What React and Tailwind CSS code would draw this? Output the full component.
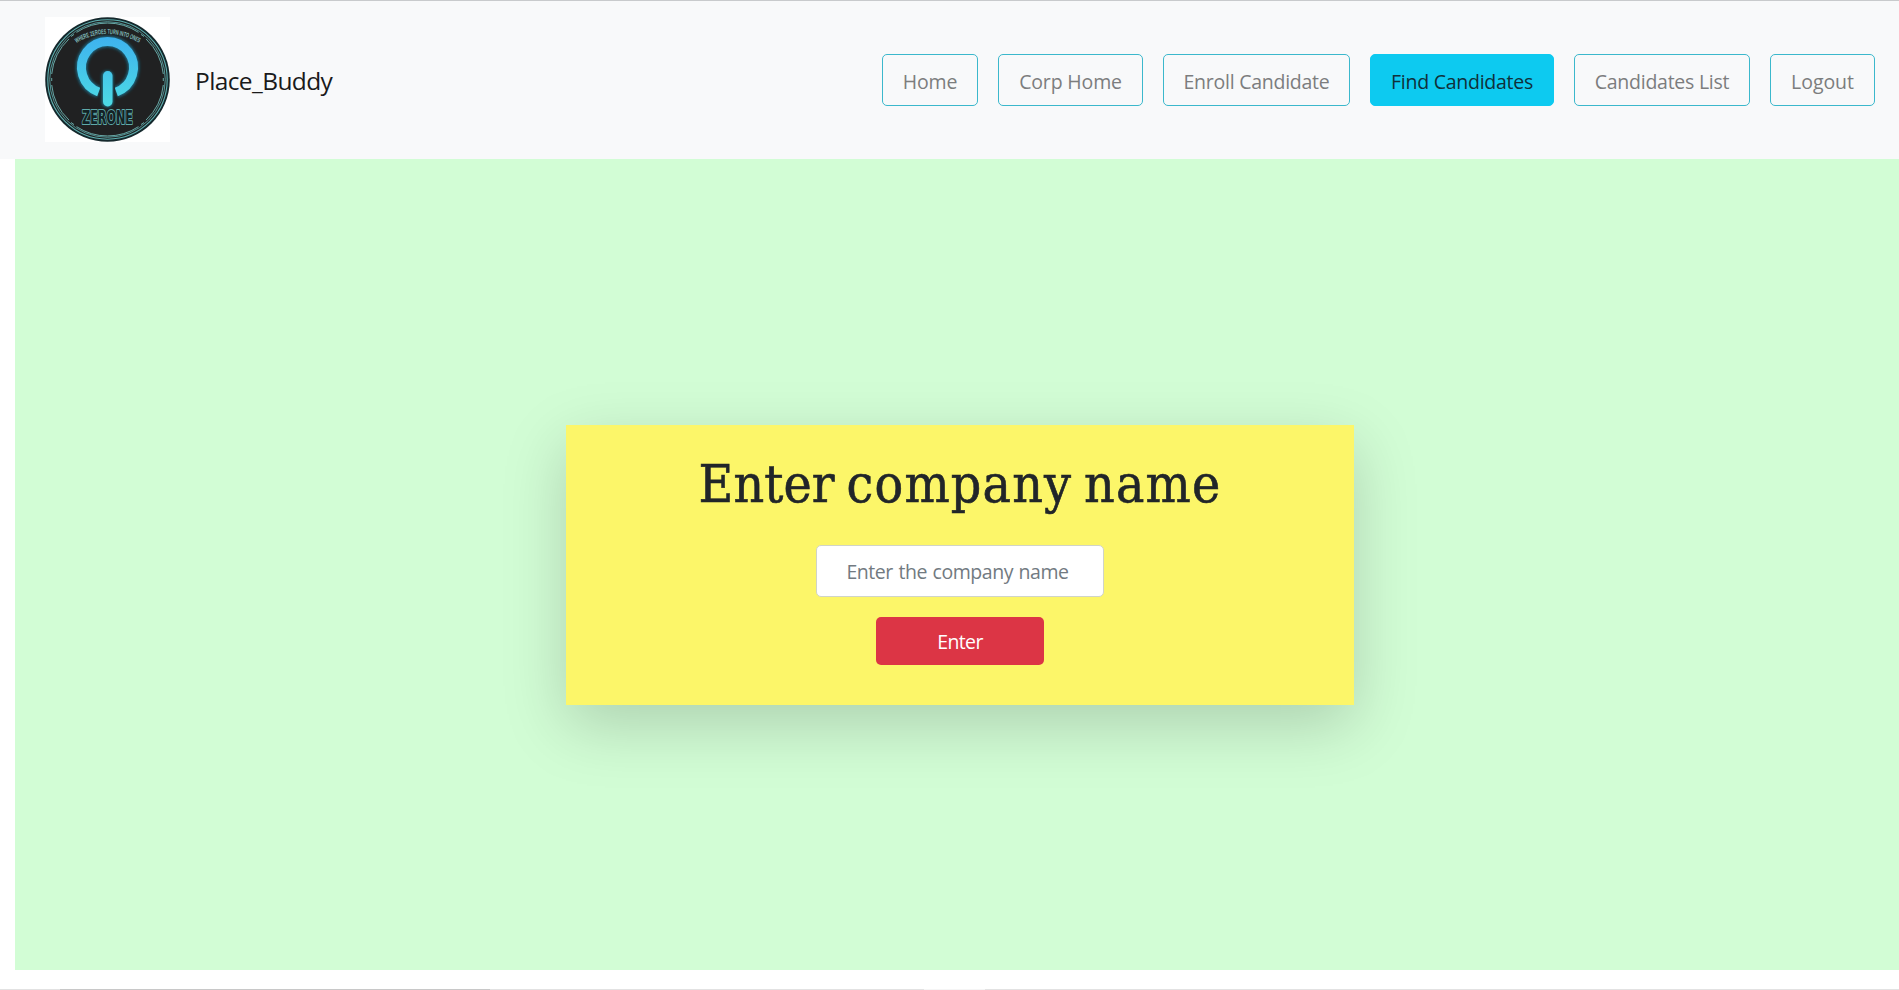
const NAV_ITEMS = [
  { label: "Home", width: "w-[96px]", tracking: "tracking-[-0.15px]" },
  { label: "Corp Home", width: "w-[145px]", tracking: "tracking-[-0.15px]" },
  { label: "Enroll Candidate", width: "w-[187px]", tracking: "tracking-[-0.25px]" },
  { label: "Find Candidates", width: "w-[184px]", tracking: "tracking-[-0.25px]", active: true },
  { label: "Candidates List", width: "w-[176px]", tracking: "tracking-[-0.25px]" },
  { label: "Logout", width: "w-[105px]", tracking: "tracking-[-0.05px]" },
];

function Logo() {
  return (
    <svg className="-mt-0.5 size-[125px] shrink-0 bg-white" viewBox="0 0 125 125">
      <defs>
        <linearGradient id="glow" x1="0" y1="20" x2="0" y2="90" gradientUnits="userSpaceOnUse">
          <stop offset="0" stopColor="#3eb2ee" />
          <stop offset="1" stopColor="#4ddbe4" />
        </linearGradient>
        <filter id="soft" x="-20%" y="-20%" width="140%" height="140%">
          <feGaussianBlur stdDeviation="1.4" />
        </filter>
        <path id="motto" d="M 31.5 26 Q 62.5 7 97 27.5" />
      </defs>
      <circle cx="62.5" cy="62.5" r="62.3" fill="#14282c" />
      <circle cx="62.5" cy="62.5" r="59.7" fill="#202122" stroke="#5fb0b0" strokeWidth="1.1" />
      <circle cx="62.5" cy="62.5" r="57.8" fill="none" stroke="#56a0a2" strokeWidth="0.9" />
      <g fill="none" stroke="#6fb5b3" strokeWidth="0.9">
        <path d="M31.5 15.4A56 56 0 0 1 93.5 15.4" />
        <path d="M31.5 109.6A56 56 0 0 0 93.5 109.6" />
        <path d="M24 21.9A56 56 0 0 0 6.7 57" />
        <path d="M24 103.1A56 56 0 0 1 6.7 68" />
        <path d="M101 21.9A56 56 0 0 1 118.3 57" />
        <path d="M101 103.1A56 56 0 0 0 118.3 68" />
        <path d="M26 19.5l3-2.1M99 19.5l-3-2.1M26 105.5l3 2.1M99 105.5l-3 2.1M6.7 61v3M118.3 61v3" />
      </g>
      <text fill="#82bcbc" fontFamily="Liberation Sans Narrow, Liberation Sans" fontSize="6.8" fontWeight="700">
        <textPath href="#motto" textLength="66" lengthAdjust="spacingAndGlyphs">WHERE ZEROES TURN INTO ONES</textPath>
      </text>
      <path d="M53.7 75A26 26 0 1 1 71.3 75" fill="none" stroke="#1d6f8c" strokeWidth="11" filter="url(#soft)" />
      <path d="M53.7 75A26 26 0 1 1 71.3 75" fill="none" stroke="url(#glow)" strokeWidth="9" />
      <rect x="55" y="53" width="15" height="38" rx="6" fill="#202122" />
      <rect x="57" y="54" width="11" height="36" rx="5" fill="#1d7f96" filter="url(#soft)" />
      <rect x="58" y="54" width="9.5" height="35.5" rx="4.7" fill="url(#glow)" />
      <text
        x="37"
        y="107"
        textLength="51"
        lengthAdjust="spacingAndGlyphs"
        fill="#132225"
        stroke="#5eaaaa"
        strokeWidth="2"
        paintOrder="stroke"
        strokeLinejoin="round"
        fontFamily="DejaVu Sans Condensed, DejaVu Sans"
        fontSize="20"
        fontWeight="700"
      >
        ZERONE
      </text>
    </svg>
  );
}

export default function App() {
  return (
    <div className="flex h-[990px] w-full flex-col overflow-hidden bg-white font-['Open_Sans',sans-serif] text-[20px] leading-[30px]">
      <header className="flex h-[159px] items-center border-t border-[#c8cacc] bg-[#f8f9fa] pr-6 pl-[45px]">
        <Logo />
        <span className="ml-[25px] pt-0.5 text-[24.5px] tracking-[-0.6px] text-[#1a1a1a]">Place_Buddy</span>
        <nav className="ml-auto flex gap-5">
          {NAV_ITEMS.map((item) => (
            <a
              key={item.label}
              className={`flex h-[52px] items-center justify-center rounded-[5px] border pt-[3px] text-[19.5px] whitespace-nowrap ${item.width} ${item.tracking} ${
                item.active ? "border-[#0dcaf0] bg-[#0dcaf0] text-[#10303a]" : "border-[#3bb8cc] text-[#7c7d7e]"
              }`}
            >
              {item.label}
            </a>
          ))}
        </nav>
      </header>
      <main className="ml-[15px] flex h-[811px] justify-center bg-[#d2fdd5] pt-[266px]">
        <form className="ml-[6px] flex h-[280px] w-[788px] flex-col items-center bg-[#fcf669] pt-[29px] shadow-[0_20px_60px_rgba(0,0,0,0.175)]">
          <h1 className="h-[60px] text-[53px] leading-[60px] tracking-[1.2px] [word-spacing:-4.5px] whitespace-nowrap text-[#212529] [-webkit-text-stroke:0.6px_#212529] [font-family:'DejaVu_Serif_Condensed','DejaVu_Serif',serif] [font-stretch:condensed]">
            <span className="tracking-[0.1px]">Enter</span> company name
          </h1>
          <input
            className="mt-[31px] h-[52px] w-[288px] shrink-0 rounded-[5px] border border-[#d0d4c8] bg-white pt-px pr-[5px] text-center text-[19.5px] tracking-[-0.45px] [word-spacing:1px] placeholder:text-[#727a81]"
            placeholder="Enter the company name"
          />
          <button type="button" className="mt-5 h-12 w-[168px] shrink-0 rounded-[5px] bg-[#dc3545] pt-0.5 text-[19.5px] tracking-[-0.6px] text-white">
            Enter
          </button>
        </form>
      </main>
      <footer className="mt-[19px] flex h-px bg-[#e2e2e2]">
        <div className="ml-[60px] h-px w-[430px] bg-[#c8c8c8]" />
        <div className="ml-[434px] h-px w-[61px] bg-[#f5f5f5]" />
      </footer>
    </div>
  );
}
